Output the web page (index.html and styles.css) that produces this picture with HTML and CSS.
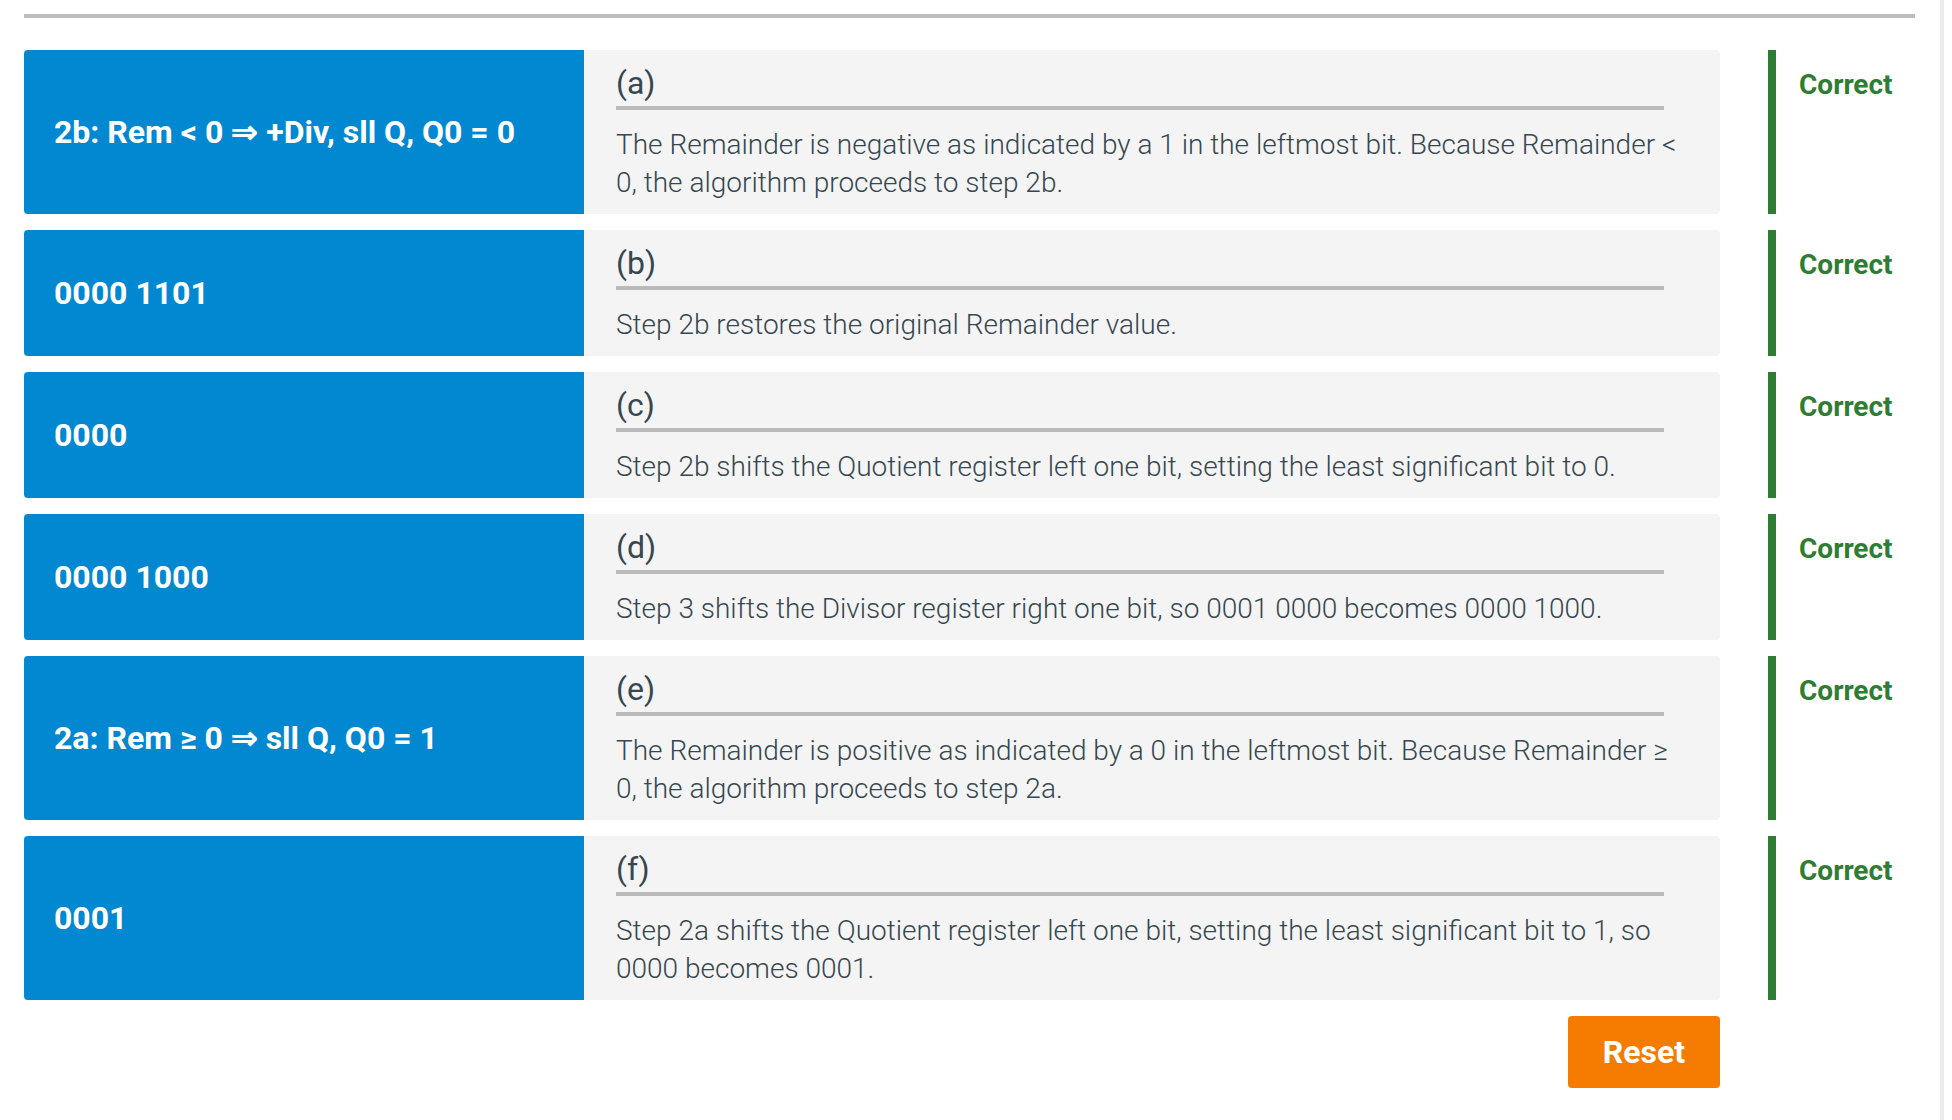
FILE: index.html
```html
<!DOCTYPE html>
<html lang="en">
<head>
<meta charset="utf-8">
<title>Division steps</title>
<link rel="stylesheet" href="styles.css">
</head>
<body>
<div class="frame">
  <div class="activity">
    <div class="rule"></div>
    <div class="rows">
      <div class="item">
        <div class="card">
          <div class="term">2b: Rem &lt; 0 ⇒ +Div, sll Q, Q0 = 0</div>
          <div class="def">
            <div class="label">(a)</div>
            <div class="desc">The Remainder is negative as indicated by a 1 in the leftmost bit. Because Remainder &lt; 0, the algorithm proceeds to step 2b.</div>
          </div>
        </div>
        <div class="result">Correct</div>
      </div>
      <div class="item">
        <div class="card">
          <div class="term">0000 1101</div>
          <div class="def">
            <div class="label">(b)</div>
            <div class="desc">Step 2b restores the original Remainder value.</div>
          </div>
        </div>
        <div class="result">Correct</div>
      </div>
      <div class="item">
        <div class="card">
          <div class="term">0000</div>
          <div class="def">
            <div class="label">(c)</div>
            <div class="desc">Step 2b shifts the Quotient register left one bit, setting the least significant bit to 0.</div>
          </div>
        </div>
        <div class="result">Correct</div>
      </div>
      <div class="item">
        <div class="card">
          <div class="term">0000 1000</div>
          <div class="def">
            <div class="label">(d)</div>
            <div class="desc">Step 3 shifts the Divisor register right one bit, so 0001 0000 becomes 0000 1000.</div>
          </div>
        </div>
        <div class="result">Correct</div>
      </div>
      <div class="item">
        <div class="card">
          <div class="term">2a: Rem ≥ 0 ⇒ sll Q, Q0 = 1</div>
          <div class="def">
            <div class="label">(e)</div>
            <div class="desc">The Remainder is positive as indicated by a 0 in the leftmost bit. Because Remainder ≥ 0, the algorithm proceeds to step 2a.</div>
          </div>
        </div>
        <div class="result">Correct</div>
      </div>
      <div class="item">
        <div class="card">
          <div class="term">0001</div>
          <div class="def">
            <div class="label">(f)</div>
            <div class="desc">Step 2a shifts the Quotient register left one bit, setting the least significant bit to 1, so 0000 becomes 0001.</div>
          </div>
        </div>
        <div class="result">Correct</div>
      </div>
    </div>
    <div class="actions">
      <button class="reset" type="button">Reset</button>
    </div>
  </div>
</div>
</body>
</html>
```

FILE: styles.css
```css
html, body {
  margin: 0;
  padding: 0;
  background: #ffffff;
}

body {
  font-family: Roboto, "Liberation Sans", Arial, sans-serif;
  color: #37474f;
}

.frame {
  width: 1940px;
  min-height: 100vh;
  border-right: 4px solid #ececec;
  box-sizing: content-box;
}

.activity {
  margin-left: 24px;
  width: 1891px;
  padding-top: 14px;
}

.rule {
  height: 4px;
  background: #bdbdbd;
}

.rows {
  margin-top: 32px;
  display: flex;
  flex-direction: column;
  gap: 16px;
}

.item {
  display: flex;
  align-items: stretch;
}

.card {
  display: flex;
  width: 1696px;
  flex: none;
}

.term {
  width: 560px;
  flex: none;
  box-sizing: border-box;
  padding: 0 30px;
  display: flex;
  align-items: center;
  background: #0288d1;
  color: #ffffff;
  font-weight: 700;
  font-size: 32px;
  line-height: 38px;
  border-radius: 4px 0 0 4px;
}

.def {
  flex: 1;
  background: #f4f4f4;
  border-radius: 0 4px 4px 0;
  padding: 16px 32px 12px 32px;
}

.label {
  font-size: 32px;
  line-height: 35px;
  font-weight: 400;
  color: #37474f;
  margin-right: 24px;
  padding-bottom: 5px;
  border-bottom: 4px solid #bbbbbb;
}

.desc {
  margin-top: 16px;
  font-size: 28px;
  line-height: 38px;
  font-weight: 300;
  color: #37474f;
}

.result {
  margin-left: 48px;
  border-left: 8px solid #2e7d32;
  padding: 16px 0 0 23px;
  color: #2e7d32;
  font-weight: 700;
  font-size: 28px;
  line-height: 38px;
}

.actions {
  width: 1696px;
  display: flex;
  justify-content: flex-end;
  margin-top: 16px;
}

.reset {
  width: 152px;
  height: 72px;
  border: none;
  border-radius: 4px;
  background: #f57c00;
  color: #ffffff;
  font-family: Roboto, "Liberation Sans", Arial, sans-serif;
  font-weight: 700;
  font-size: 32px;
  padding: 0;
  cursor: pointer;
}
```
